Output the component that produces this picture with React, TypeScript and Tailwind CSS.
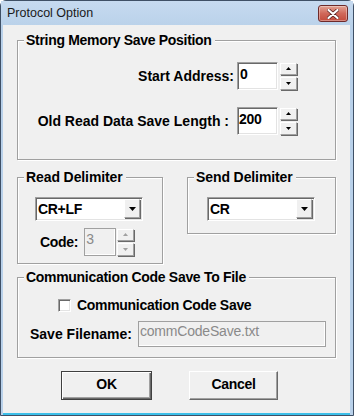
import React from "react";

const F = "font-['Liberation_Sans',Arial,sans-serif]";
const B = "text-[14px] font-bold leading-[16px]";
const T = `${B} tracking-[-0.3px]`;

function UpArrow({ disabled }: { disabled?: boolean }) {
  return (
    <svg width="5" height="3" viewBox="0 0 5 3">
      <path d="M2.5 0 L5 3 L0 3 Z" fill={disabled ? "#a0a0a0" : "#000"} />
    </svg>
  );
}
function DownArrow({ disabled, w = 5, h = 3 }: { disabled?: boolean; w?: number; h?: number }) {
  return (
    <svg width={w} height={h} viewBox={`0 0 ${w} ${h}`}>
      <path d={`M0 0 L${w} 0 L${w / 2} ${h} Z`} fill={disabled ? "#a0a0a0" : "#000"} />
    </svg>
  );
}

const raised =
  "border border-t-white border-l-white border-r-[#a0a0a0] border-b-[#a0a0a0] shadow-[1px_1px_0_#696969] bg-[#f0f0f0]";
const sunken =
  "border border-t-[#a0a0a0] border-l-[#a0a0a0] border-r-white border-b-white shadow-[inset_1px_1px_0_#696969,inset_-1px_-1px_0_#e3e3e3]";

function Spinner({ disabled, h = 28 }: { disabled?: boolean; h?: number }) {
  return (
    <div className="flex w-[17px] flex-col gap-[2px]" style={{ height: h - 1 }}>
      <div className={`flex flex-1 items-center justify-center ${raised}`}>
        <UpArrow disabled={disabled} />
      </div>
      <div className={`flex flex-1 items-center justify-center ${raised}`}>
        <DownArrow disabled={disabled} />
      </div>
    </div>
  );
}

function Group({
  title,
  className,
  titleClass = T,
  children,
}: {
  title: string;
  className: string;
  titleClass?: string;
  children?: React.ReactNode;
}) {
  return (
    <div
      className={`relative border border-[#a0a0a0] shadow-[inset_1px_1px_0_#fff,1px_1px_0_#fff] ${className}`}
    >
      <span className={`absolute left-[6px] top-[-9px] bg-[#f0f0f0] pl-[2px] pr-[3px] whitespace-nowrap ${titleClass}`}>
        {title}
      </span>
      {children}
    </div>
  );
}

function Combo({ value }: { value: string }) {
  return (
    <div className={`flex h-[24px] w-[108px] items-stretch bg-white ${sunken} p-[1px] pl-[1px]`}>
      <div className={`flex flex-1 items-center pl-[1px] ${T}`}>{value}</div>
      <div className={`flex w-[16px] items-center justify-center ${raised} mr-[1px] mb-[1px]`}>
        <DownArrow w={7} h={4} />
      </div>
    </div>
  );
}

export default function App() {
  return (
    <div className={`${F} h-[416px] w-[354px] overflow-hidden`}>
      <div className="flex h-[416px] w-[354px] flex-col rounded-t-[6px] border border-[#3f5066] bg-[#b9d1ea]">
        {/* title bar */}
        <div className="flex h-[24px] shrink-0 items-start justify-between bg-gradient-to-b from-[#c6daf0] to-[#bad2ea]">
          <span className="pl-[6px] pt-[5px] text-[12.5px] leading-[15px] text-[#1a1a1a]">Protocol Option</span>
          <div className="mr-[5px] mt-[4px] flex h-[17px] w-[30px] items-center justify-center rounded-[3px] border border-[#6e2a2a] bg-gradient-to-b from-[#e2a294] via-[#d0685a] to-[#c34b3c] shadow-[inset_0_0_0_1px_rgba(255,255,255,0.35)]">
            <svg width="12" height="10" viewBox="0 0 12 10">
              <path d="M1.5 1 L10.5 9 M10.5 1 L1.5 9" stroke="#5a2020" strokeWidth="3.6" strokeLinecap="round" />
              <path d="M1.5 1 L10.5 9 M10.5 1 L1.5 9" stroke="#fff" strokeWidth="2.2" strokeLinecap="round" />
            </svg>
          </div>
        </div>
        {/* client */}
        <div className="ml-[2px] mr-[3px] flex h-[388px] flex-col bg-[#f0f0f0] text-black">
          <Group title="String Memory Save Position" className="ml-[14px] mt-[15px] h-[120px] w-[319px]">
            <div className="flex flex-col gap-[17px] pr-[38px] pt-[21px]">
              <div className="flex items-center justify-end">
                <span className={B}>Start Address:</span>
                <div className={`ml-[3px] h-[28px] w-[41px] bg-white pl-[2px] pt-[3px] ${T} ${sunken}`}>0</div>
                <div className="ml-[2px]">
                  <Spinner />
                </div>
              </div>
              <div className="flex items-center justify-end">
                <span className={B}>Old Read Data Save Length :</span>
                <div className={`ml-[8px] h-[28px] w-[41px] bg-white pl-[1px] pt-[3px] ${T} ${sunken}`}>200</div>
                <div className="ml-[2px]">
                  <Spinner />
                </div>
              </div>
            </div>
          </Group>

          <div className="mt-[17px] flex items-start">
            <Group title="Read Delimiter" titleClass={`${B} tracking-[-0.1px]`} className="ml-[14px] h-[87px] w-[146px]">
              <div className="flex flex-col pl-[17px] pt-[19px]">
                <Combo value="CR+LF" />
                <div className="mt-[7px] flex items-center pl-[5px]">
                  <span className={T}>Code:</span>
                  <div className="ml-[6px] h-[28px] w-[32px] border border-[#a0a0a0] bg-[#f0f0f0] pl-[1px] pt-[2px] text-[14px] leading-[16px] text-[#8a8a8a] shadow-[inset_-1px_-1px_0_#fff]">
                    3
                  </div>
                  <div className="ml-[1px]">
                    <Spinner disabled />
                  </div>
                </div>
              </div>
            </Group>
            <Group title="Send Delimiter" titleClass={`${B} tracking-[-0.1px]`} className="ml-[24px] h-[57px] w-[149px]">
              <div className="pl-[19px] pt-[19px]">
                <Combo value="CR" />
              </div>
            </Group>
          </div>

          <Group title="Communication Code Save To File" className="ml-[14px] mt-[13px] h-[81px] w-[319px]">
            <div className="flex flex-col pt-[19px]">
              <div className="flex h-[16px] items-center pl-[40px]">
                <div className={`h-[13px] w-[13px] bg-white ${sunken}`} />
                <span className={`ml-[6px] ${T}`}>Communication Code Save</span>
              </div>
              <div className="mt-[8px] flex items-center pl-[12px]">
                <span className={B}>Save Filename:</span>
                <div className="ml-[6px] h-[26px] w-[188px] border border-[#a0a0a0] bg-[#f0f0f0] pl-[1px] pt-[1px] text-[14px] leading-[16px] tracking-[-0.2px] text-[#8a8a8a] shadow-[inset_-1px_-1px_0_#fff]">
                  commCodeSave.txt
                </div>
              </div>
            </div>
          </Group>

          <div className="ml-[58px] mt-[13px] flex">
            <div className={`flex h-[29px] w-[91px] items-center justify-center border border-[#404040] bg-[#f0f0f0] pb-[3px] ${T} shadow-[inset_1px_1px_0_#fff,inset_-1px_-1px_0_#696969,inset_-2px_-2px_0_#a0a0a0]`}>
              OK
            </div>
            <div className={`ml-[37px] flex h-[29px] w-[89px] items-center justify-center border border-t-white border-l-white border-r-[#696969] border-b-[#696969] bg-[#f0f0f0] pb-[3px] ${T} shadow-[inset_-1px_-1px_0_#a0a0a0]`}>
              Cancel
            </div>
          </div>
        </div>
        <div className="ml-[2px] mr-[3px] h-[2px] bg-[#3cbfe9]" />
      </div>
    </div>
  );
}
